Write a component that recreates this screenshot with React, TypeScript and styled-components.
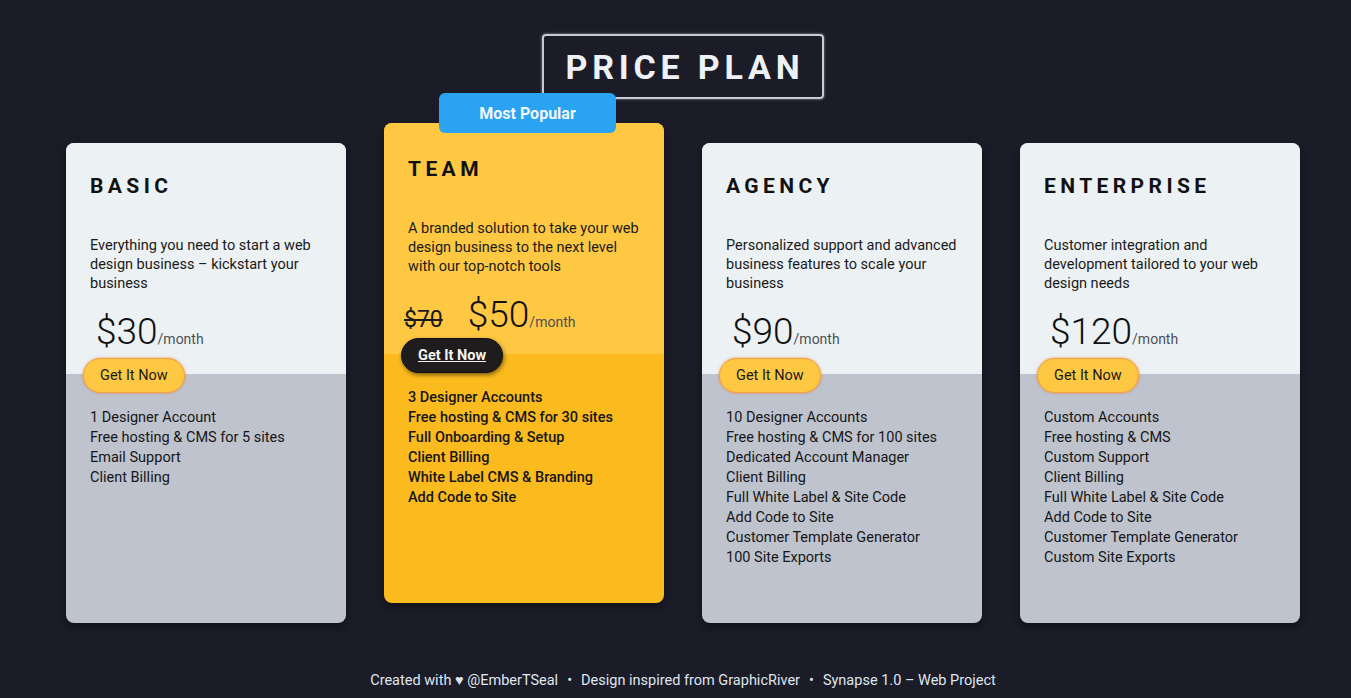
import React from "react";
import styled, { createGlobalStyle, css } from "styled-components";

const Global = createGlobalStyle`
  html, body { margin: 0; padding: 0; background: #1b1c28; }
  body { font-family: Roboto, "Liberation Sans", sans-serif; color: #111; }
  * { box-sizing: border-box; }
`;

const Page = styled.div`
  width: 1351px;
  height: 698px;
  background: #1b1c28;
  display: flex;
  flex-direction: column;
  align-items: flex-start;
  padding: 34px 0 0 66px;
`;

const Header = styled.div`
  width: 1234px;
  display: flex;
  justify-content: center;
`;

const TitleBox = styled.h1`
  margin: 0;
  width: 282px;
  height: 65px;
  border: 2px solid #c9cbd3;
  border-radius: 4px;
  box-shadow: 0 0 3px rgba(220, 220, 230, 0.6);
  display: flex;
  align-items: center;
  justify-content: center;
  padding-left: 4px;
  color: #eef2f6;
  font-family: Roboto, sans-serif;
  font-weight: 700;
  font-size: 34px;
  letter-spacing: 4.8px;
`;

const Cards = styled.div`
  display: flex;
  gap: 38px;
  margin-top: 44px;
  align-items: flex-start;
`;

type Variant = { $popular?: boolean };

const Card = styled.div<Variant>`
  position: relative;
  width: 280px;
  height: 480px;
  border-radius: 8px;
  display: flex;
  flex-direction: column;
  box-shadow: 0 4px 10px rgba(0, 0, 0, 0.45);
  background: ${(p) => (p.$popular ? "#fbbb1e" : "#bec3ce")};
  margin-top: ${(p) => (p.$popular ? "-20px" : "0")};
`;

const Badge = styled.div`
  position: absolute;
  top: -30px;
  left: 55px;
  width: 177px;
  height: 40px;
  border-radius: 6px;
  background: #2aa3f3;
  color: #f2f6fa;
  font-weight: 700;
  font-size: 16px;
  display: flex;
  align-items: center;
  justify-content: center;
`;

const Top = styled.div<Variant>`
  height: 231px;
  flex: none;
  border-radius: 8px 8px 0 0;
  background: ${(p) => (p.$popular ? "#fec843" : "#ecf1f4")};
  padding: ${(p) => (p.$popular ? "34px" : "31px")} 24px 0 24px;
  display: flex;
  flex-direction: column;
`;

const Name = styled.h2`
  margin: 0;
  font-size: 21px;
  line-height: 24px;
  font-weight: 700;
  letter-spacing: 4.4px;
  color: #111;
`;

const Desc = styled.p`
  margin: 38px 0 0 0;
  font-size: 14.5px;
  line-height: 19px;
  color: #1a1a1a;
`;

const PriceRow = styled.div<Variant>`
  margin-top: 17px;
  display: flex;
  align-items: baseline;
  padding-left: ${(p) => (p.$popular ? "0" : "6px")};
`;

const OldPrice = styled.span`
  font-size: 23px;
  font-weight: 400;
  text-decoration: line-through;
  text-decoration-thickness: 2px;
  margin: 0 25px 0 -4px;
  color: #1a1a1a;
`;

const Amount = styled.span`
  font-size: 37px;
  font-weight: 300;
  color: #111;
`;

const Per = styled.span`
  font-size: 14px;
  color: #4d5058;
`;

const Bottom = styled.div`
  display: flex;
  flex-direction: column;
  padding: 0 24px 0 24px;
`;

const Button = styled.button<Variant>`
  align-self: flex-start;
  margin: -16px 0 0 -7px;
  height: 35px;
  padding: 0 16px;
  border-radius: 18px;
  font-family: Roboto, sans-serif;
  font-size: 14.5px;
  cursor: pointer;
  ${(p) =>
    p.$popular
      ? css`
          background: #1e1c1c;
          color: #f4f4f4;
          font-weight: 700;
          text-decoration: underline;
          border: 1px solid #111;
          box-shadow: 1px 2px 4px rgba(0, 0, 0, 0.5);
        `
      : css`
          background: #fec843;
          color: #1a1a1a;
          font-weight: 400;
          border: 1px solid #f5a040;
          box-shadow: 0 0 3px rgba(240, 120, 40, 0.7);
        `}
`;

const Features = styled.ul<Variant>`
  list-style: none;
  margin: 15px 0 0 0;
  padding: 0;
  font-size: 14.5px;
  line-height: 20px;
  color: #161616;
  font-weight: ${(p) => (p.$popular ? 500 : 400)};
`;

const Footer = styled.footer`
  width: 1234px;
  margin-top: 49px;
  text-align: center;
  color: #dfe6ee;
  font-size: 14.5px;
`;

const Dot = styled.span`
  margin: 0 9px;
`;

type Plan = {
  name: string;
  desc: string;
  price: string;
  old?: string;
  features: string[];
  popular?: boolean;
};

const plans: Plan[] = [
  {
    name: "BASIC",
    desc: "Everything you need to start a web design business – kickstart your business",
    price: "$30",
    features: ["1 Designer Account", "Free hosting & CMS for 5 sites", "Email Support", "Client Billing"],
  },
  {
    name: "TEAM",
    desc: "A branded solution to take your web design business to the next level with our top-notch tools",
    price: "$50",
    old: "$70",
    popular: true,
    features: [
      "3 Designer Accounts",
      "Free hosting & CMS for 30 sites",
      "Full Onboarding & Setup",
      "Client Billing",
      "White Label CMS & Branding",
      "Add Code to Site",
    ],
  },
  {
    name: "AGENCY",
    desc: "Personalized support and advanced business features to scale your business",
    price: "$90",
    features: [
      "10 Designer Accounts",
      "Free hosting & CMS for 100 sites",
      "Dedicated Account Manager",
      "Client Billing",
      "Full White Label & Site Code",
      "Add Code to Site",
      "Customer Template Generator",
      "100 Site Exports",
    ],
  },
  {
    name: "ENTERPRISE",
    desc: "Customer integration and development tailored to your web design needs",
    price: "$120",
    features: [
      "Custom Accounts",
      "Free hosting & CMS",
      "Custom Support",
      "Client Billing",
      "Full White Label & Site Code",
      "Add Code to Site",
      "Customer Template Generator",
      "Custom Site Exports",
    ],
  },
];

export default function App() {
  return (
    <>
      <Global />
      <Page>
        <Header>
          <TitleBox>PRICE PLAN</TitleBox>
        </Header>
        <Cards>
          {plans.map((p) => (
            <Card key={p.name} $popular={p.popular}>
              {p.popular && <Badge>Most Popular</Badge>}
              <Top $popular={p.popular}>
                <Name>{p.name}</Name>
                <Desc>{p.desc}</Desc>
                <PriceRow $popular={p.popular}>
                  {p.old && <OldPrice>{p.old}</OldPrice>}
                  <Amount>{p.price}</Amount>
                  <Per>/month</Per>
                </PriceRow>
              </Top>
              <Bottom>
                <Button $popular={p.popular}>Get It Now</Button>
                <Features $popular={p.popular}>
                  {p.features.map((f) => (
                    <li key={f}>{f}</li>
                  ))}
                </Features>
              </Bottom>
            </Card>
          ))}
        </Cards>
        <Footer>
          Created with ♥ @EmberTSeal<Dot>•</Dot>Design inspired from GraphicRiver<Dot>•</Dot>Synapse 1.0 – Web Project
        </Footer>
      </Page>
    </>
  );
}
